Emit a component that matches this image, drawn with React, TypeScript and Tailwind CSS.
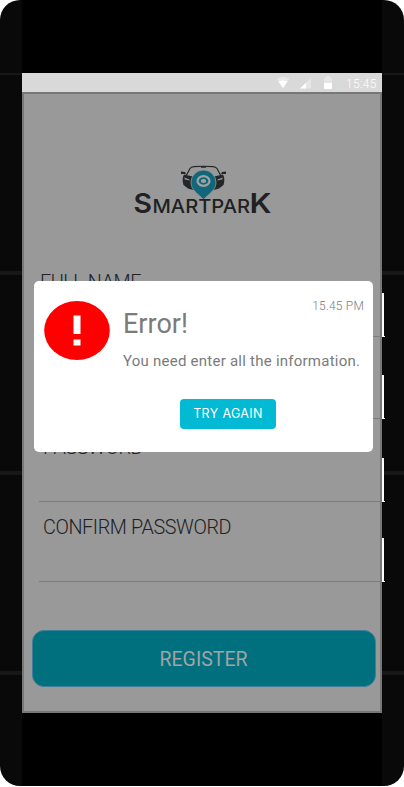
import React from 'react';

function StatusBar() {
  return (
    <div className="flex h-[19px] items-center bg-[#d9d9d9] pl-[254px] text-white">
      <svg width="58" height="19" viewBox="0 0 58 19" className="mr-[12px] block shrink-0" fill="#fff">
        <path d="M0.7 6.2C4 3.4 10 3.4 13.3 6.2L7 15Z" fillOpacity=".4" />
        <path d="M2.6 8.7C5.2 7 8.800 7 11.400 8.700L7 15Z" />
        <path d="M35 5V15.500H24Z" fillOpacity=".35" />
        <path d="M24 15.500L30 9.700V15.500Z" />
        <path d="M48 10V5.200L50 4.200V3H54V4.200L56 5.200V10Z" fillOpacity=".35" />
        <path d="M48 10H56V15Q56 16 55 16H49Q48 16 48 15Z" />
      </svg>
      <span className="pt-[3px] text-[12px] leading-[16px] font-light tracking-[.3px]">15:45</span>
    </div>
  );
}

function Logo() {
  return (
    <svg width="140" height="54" viewBox="0 0 140 54" className="ml-[108px] block">
      <path d="M54 11L58 3.500Q59 2 62 1.700Q71.500 .8 81 1.700Q84 2 85 3.500L89 11" fill="none" stroke="#242628" strokeWidth="1.200" />
      <path d="M69 1.300H74V2.800H69Z" fill="#242628" />
      <path d="M49 6.500L53 7L54 9H49ZM94 6.500L90 7L89 9H94Z" fill="#242628" />
      <path d="M52 9.500L61 11.500L62 18L65 26L56 23.500L51.500 20Q49.500 14 52 9.500ZM91 9.500L82 11.500L81 18L78 26L87 23.500L91.500 20Q93.500 14 91 9.500Z" fill="#242628" />
      <path d="M52 12.500L57 14.200L58 15.600L53 14.500ZM91 12.500L86 14.200L85 15.600L90 14.500Z" fill="#999" />
      <path d="M71.500 34.500C66 29 59 25 59 17.500A12.500 12.500 0 0 1 84 17.500C84 25 77 29 71.500 34.500Z" fill="#10667b" stroke="#999" strokeWidth=".8" />
      <ellipse cx="71.500" cy="16" rx="6" ry="4.800" fill="none" stroke="#a1a1a1" strokeWidth="2.200" />
      <ellipse cx="71.500" cy="16" rx="2.700" ry="2" fill="#a1a1a1" />
      <g fill="#202123" fontFamily="Inter, sans-serif">
        <text x="1.500" y="48" fontSize="26.500" fontWeight="600" textLength="18.500" lengthAdjust="spacingAndGlyphs">S</text>
        <text x="20.500" y="48" fontSize="18" fontWeight="500" textLength="97.500" lengthAdjust="spacingAndGlyphs">MARTPAR</text>
        <text x="117.500" y="48" fontSize="26.500" fontWeight="600" textLength="22" lengthAdjust="spacingAndGlyphs">K</text>
      </g>
    </svg>
  );
}

function Field({ label, className, labelClass }: { label: string; className: string; labelClass: string }) {
  return (
    <div className={`mr-[-5px] ml-[15px] flex flex-col ${className}`}>
      <label className={`h-[20px] text-[19.800px] leading-[20px] font-light tracking-[-.4px] whitespace-nowrap text-[#202225] ${labelClass}`}>{label}</label>
      <div className="flex flex-1 flex-col items-end">
        <div className="mr-px w-[2px] flex-1 bg-white" />
        <div className="flex h-px w-full">
          <div className="flex-1 bg-[#7c7c7c]" />
          <div className="w-[3px] bg-white" />
        </div>
      </div>
    </div>
  );
}

function ErrorDialog() {
  return (
    <div role="dialog" className="absolute top-[281px] left-[34px] z-20 flex h-[171px] w-[339px] flex-col rounded-[5px] bg-white font-['Roboto',sans-serif] text-[#7b7b7b]">
      <div className="flex h-[118px]">
        <svg width="66" height="60" viewBox="0 0 66 60" className="mt-[20px] ml-[10px] shrink-0">
          <ellipse cx="33" cy="29.500" rx="32.800" ry="29.500" fill="#f00" />
          <path d="M29.500 14.500H36.500V33H29.500ZM29.500 38.500H36.500V44.500H29.500Z" fill="#fff" />
        </svg>
        <div className="ml-[13px] flex flex-1 flex-col">
          <span className="mt-[17px] mr-[9px] self-end text-[12px] leading-[16px] font-light tracking-[.2px]">15.45 PM</span>
          <h1 className="-mt-[6px] text-[27px] leading-[32px] font-normal">Error!</h1>
          <p className="mt-[11px] text-[15px] leading-[20px] tracking-[.24px] whitespace-nowrap">You need enter all the information.</p>
        </div>
      </div>
      <button className="ml-[146px] h-[30px] w-[96px] rounded-[4px] bg-[#03bad4] font-['Inter',sans-serif] text-[12.500px] leading-[28px] font-normal tracking-[.35px] whitespace-nowrap text-white">TRY AGAIN</button>
    </div>
  );
}

export default function App() {
  return (
    <div className="h-[787px] w-[404px] bg-white font-['Roboto',sans-serif]">
      <div className="relative flex h-[786px] overflow-hidden rounded-[20px] bg-[#090909]">
        <Rail />
        <main className="z-10 flex w-[360px] flex-col bg-black pt-[73px]">
          <StatusBar />
          <div className="flex h-[621px] flex-col border-2 border-[#777] bg-[#999] pt-[71px]">
            <Logo />
            <div className="pt-[54px]">
              <Field label="FULL NAME" className="h-[64px]" labelClass="pl-[1px]" />
              <Field label="EMAIL" className="mt-[18px] h-[64px]" labelClass="pl-[4px]" />
              <Field label="PASSWORD" className="mt-[19px] h-[64px]" labelClass="pl-[4px]" />
              <Field label="CONFIRM PASSWORD" className="mt-[16px] h-[64px]" labelClass="pl-[4px]" />
            </div>
            <button className="mt-[48px] ml-[8px] h-[57px] w-[344px] shrink-0 rounded-[12px] border border-[#3f7f99] bg-[#00707f] pt-[2px] pr-[1px] text-[19.500px] text-[#a3a3a3]">REGISTER</button>
          </div>
        </main>
        <Rail />
        <ErrorDialog />
      </div>
    </div>
  );
}

function Rail() {
  return (
    <div className="flex w-[22px] shrink-0 flex-col pt-[73px]">
      <div className="h-[2px] bg-[#171717]" />
      <div className="mt-[196px] h-[4px] bg-[#171717]" />
      <div className="mt-[196px] h-[4px] bg-[#171717]" />
      <div className="mt-[196px] h-[4px] bg-[#171717]" />
    </div>
  );
}
